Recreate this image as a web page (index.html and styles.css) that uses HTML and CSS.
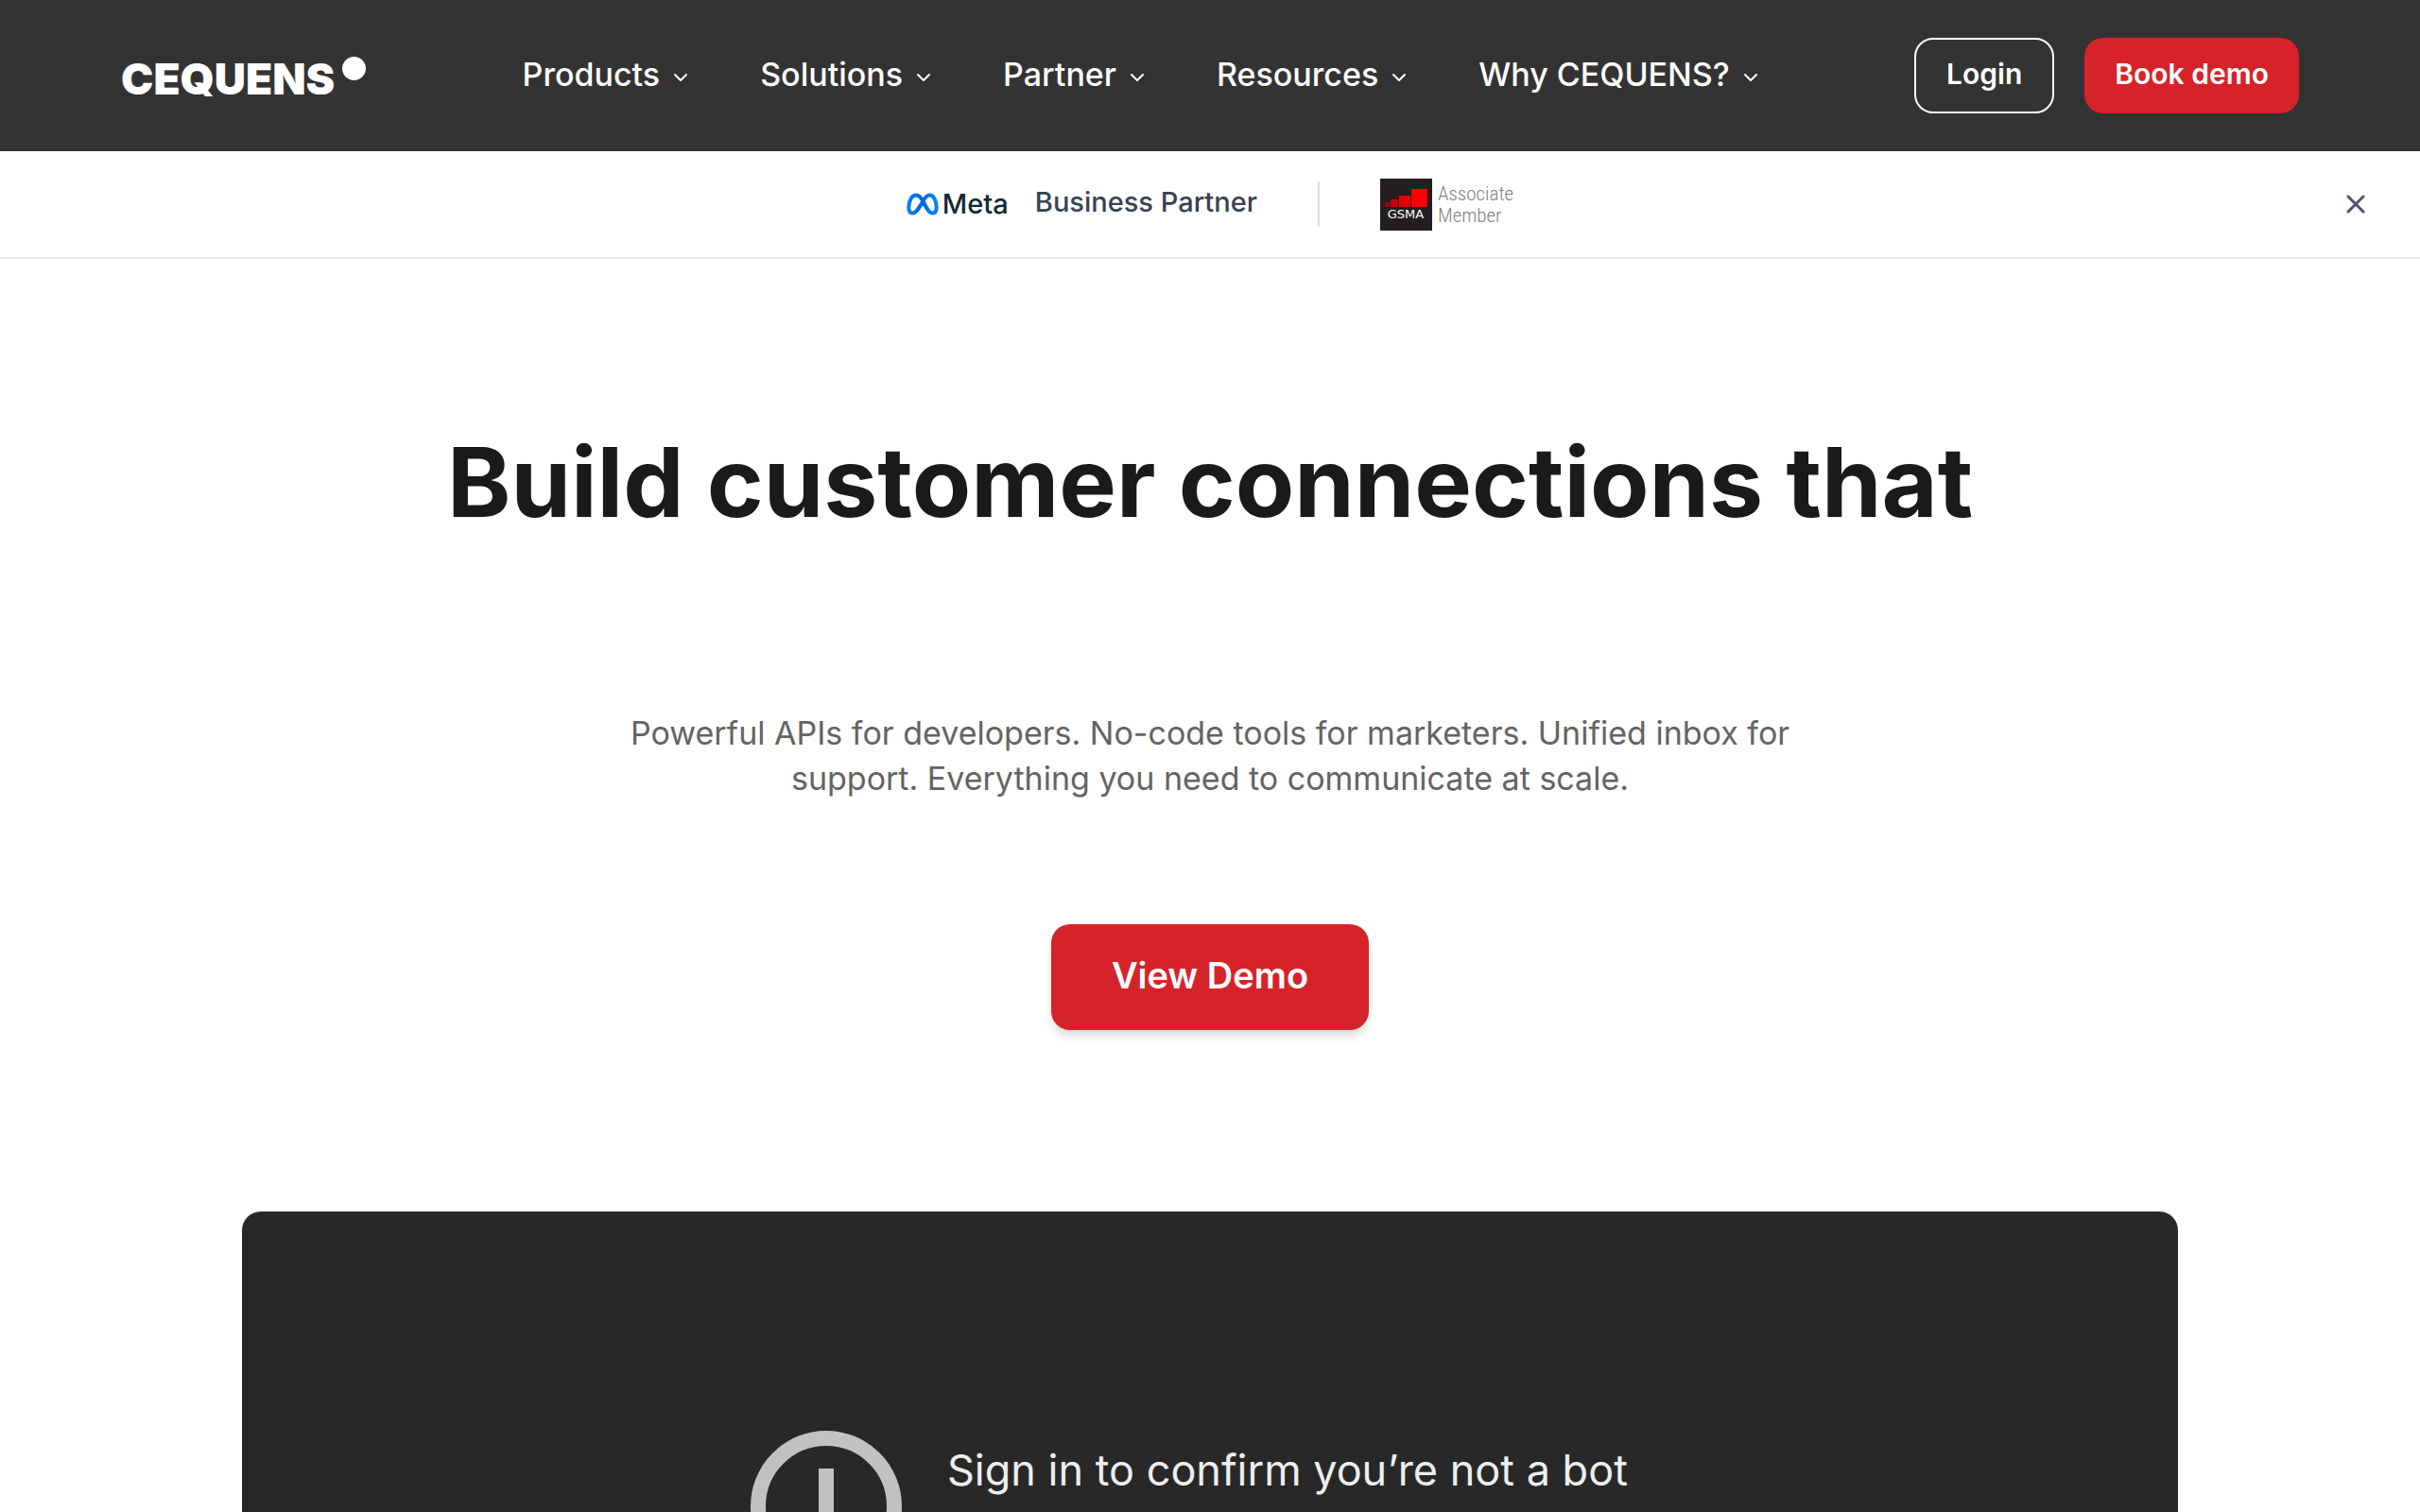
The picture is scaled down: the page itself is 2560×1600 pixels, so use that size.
FILE: index.html
```html
<!DOCTYPE html>
<html lang="en">
<head>
<meta charset="utf-8">
<meta name="viewport" content="width=device-width, initial-scale=1">
<title>CEQUENS</title>
<link rel="stylesheet" href="styles.css">
</head>
<body>
<header class="header">
  <a class="logo" href="#">CEQUENS<span class="logo-dot"></span></a>
  <nav class="nav" aria-label="Main">
    <button class="nav-item" type="button">Products<svg class="chevron" viewBox="0 0 16 12"><path d="M2 2l6 6 6-6"/></svg></button>
    <button class="nav-item" type="button">Solutions<svg class="chevron" viewBox="0 0 16 12"><path d="M2 2l6 6 6-6"/></svg></button>
    <button class="nav-item" type="button">Partner<svg class="chevron" viewBox="0 0 16 12"><path d="M2 2l6 6 6-6"/></svg></button>
    <button class="nav-item" type="button">Resources<svg class="chevron" viewBox="0 0 16 12"><path d="M2 2l6 6 6-6"/></svg></button>
    <button class="nav-item" type="button">Why CEQUENS?<svg class="chevron" viewBox="0 0 16 12"><path d="M2 2l6 6 6-6"/></svg></button>
  </nav>
  <div class="actions">
    <a class="button button-outline" href="#">Login</a>
    <a class="button" href="#">Book demo</a>
  </div>
</header>

<aside class="banner" aria-label="Partnerships">
  <div class="meta">
    <span class="meta-logo">
      <svg class="meta-mark" viewBox="0 0 34 24">
        <defs><linearGradient id="blue"><stop offset="0" stop-color="#0082fb"/><stop offset=".4" stop-color="#0064e0"/><stop offset="1" stop-color="#0082fb"/></linearGradient></defs>
        <path d="M17 8C14.500 4 12.500 2.500 10 2.500C5.500 2.500 2.300 9 2.300 15.500C2.300 19.500 4 21.500 6.500 21.500C10 21.500 12.500 17 17 9.500C19.500 5 21.500 2.500 24.500 2.500C28.800 2.500 31.700 9 31.700 15.500C31.700 19.500 30 21.500 27.500 21.500C24 21.500 22 18 17 8Z"/>
      </svg>
      <span class="meta-name">Meta</span>
    </span>
    <span class="meta-label">Business Partner</span>
  </div>
  <span class="divider"></span>
  <div class="gsma">
    <svg class="gsma-mark" viewBox="0 0 55 55">
      <rect width="55" height="55" fill="#231f20"/>
      <path d="M5 25h5v5H5z" fill="#a80000"/><path d="M11 22h8v8h-8z" fill="#c80000"/><path d="M20 18h12v12H20z" fill="#e60000"/><path d="M33 11h17v19H33z" fill="#f00"/>
      <text x="27" y="42" text-anchor="middle" class="gsma-name">GSMA</text>
    </svg>
    <span class="gsma-label">Associate<br>Member</span>
  </div>
  <button class="close" type="button" aria-label="Close"><svg class="close-icon" viewBox="0 0 20 20"><path d="M2 2l16 16M18 2L2 18"/></svg></button>
</aside>

<main class="hero">
  <h1 class="title">Build customer connections that</h1>
  <p class="lead">Powerful APIs for developers. No-code tools for marketers. Unified inbox for<br>support. Everything you need to communicate at scale.</p>
  <a class="button button-large" href="#">View Demo</a>
  <section class="video" aria-label="Video">
    <svg class="video-icon" viewBox="0 0 160 160"><circle cx="80" cy="80" r="72"/><path d="M80 40v48M80 104v16"/></svg>
    <p class="video-message">Sign in to confirm you’re not a bot</p>
  </section>
</main>
</body>
</html>
```
FILE: styles.css
```css
* {
  box-sizing: border-box;
}

body {
  margin: 0;
  height: 100vh;
  overflow: hidden;
  background: #fff;
  color: #1a1a1a;
  font-family: Inter, "Liberation Sans", sans-serif;
}

h1,
p {
  margin: 0;
}

a {
  color: inherit;
  text-decoration: none;
}

button {
  border: 0;
  padding: 0;
  background: none;
  color: inherit;
  font: inherit;
}

/* Header */
.header {
  display: flex;
  align-items: center;
  justify-content: space-between;
  height: 160px;
  padding: 0 128px;
  background: #333;
  color: #fff;
}

.logo {
  display: flex;
  align-items: center;
  gap: 8px;
  padding-top: 6px;
  font-size: 46px;
  font-weight: 900;
  line-height: 48px;
}

.logo-dot {
  width: 25px;
  height: 25px;
  margin-bottom: 22px;
  border-radius: 50%;
  background: #fff;
}

.nav {
  display: flex;
  gap: 76px;
}

.nav-item {
  display: flex;
  align-items: center;
  gap: 14px;
  padding-bottom: 2px;
  font-size: 34px;
  font-weight: 500;
  line-height: 48px;
}

.chevron {
  width: 16px;
  height: 12px;
  margin-top: 8px;
  fill: none;
  stroke: currentColor;
  stroke-width: 2;
  stroke-linecap: round;
  stroke-linejoin: round;
}

.actions {
  display: flex;
  gap: 32px;
}

.button {
  display: flex;
  align-items: center;
  justify-content: center;
  height: 80px;
  padding: 0 32px 4px;
  border-radius: 20px;
  background: #d62329;
  color: #fff;
  font-size: 30px;
  font-weight: 600;
}

.button-outline {
  border: 2px solid #fff;
  background: none;
}

/* Partner banner */
.banner {
  position: relative;
  display: flex;
  align-items: center;
  justify-content: center;
  gap: 64px;
  height: 114px;
  border-bottom: 2px solid #e5e7eb;
}

.meta {
  display: flex;
  align-items: center;
  gap: 28px;
}

.meta-logo {
  display: flex;
  align-items: center;
  gap: 4px;
}

.meta-mark {
  width: 34px;
  height: 24px;
  fill: none;
  stroke: url(#blue);
  stroke-width: 4;
}

.meta-name {
  color: #0f2a33;
  font-size: 29px;
  font-weight: 500;
  line-height: 32px;
}

.meta-label {
  padding-bottom: 4px;
  color: #374151;
  font-size: 29px;
  font-weight: 500;
  line-height: 32px;
}

.divider {
  width: 2px;
  height: 48px;
  background: #ddd;
}

.gsma {
  display: flex;
  align-items: center;
  gap: 6px;
}

.gsma-mark {
  width: 55px;
  height: 55px;
}

.gsma-name {
  fill: #fff;
  font-family: "DejaVu Sans", sans-serif;
  font-size: 13px;
}

.gsma-label {
  padding-top: 2px;
  color: #808080;
  font-family: "Roboto Condensed", Roboto, sans-serif;
  font-size: 21px;
  font-weight: 300;
  line-height: 23px;
}

.close {
  position: absolute;
  top: 32px;
  right: 44px;
  display: grid;
  place-items: center;
  width: 48px;
  height: 48px;
}

.close-icon {
  width: 20px;
  height: 20px;
  fill: none;
  stroke: #475569;
  stroke-width: 3;
  stroke-linecap: round;
}

/* Hero */
.hero {
  display: flex;
  flex-direction: column;
  align-items: center;
  padding: 176px 10% 0;
}

.title {
  font-size: 102px;
  font-weight: 700;
  line-height: 120px;
}

.lead {
  margin-top: 182px;
  color: #636363;
  font-size: 34px;
  line-height: 48px;
  text-align: center;
}

.button-large {
  height: 112px;
  margin-top: 130px;
  padding: 0 64px 4px;
  font-size: 38px;
  box-shadow: 0 8px 12px -2px rgb(0 0 0 / 16%);
}

.video {
  display: flex;
  align-items: flex-start;
  justify-content: center;
  gap: 48px;
  width: 100%;
  aspect-ratio: 16 / 9;
  margin-top: 192px;
  padding-top: 232px;
  border-radius: 20px;
  background: #282828;
}

.video-icon {
  width: 160px;
  height: 160px;
  fill: none;
  stroke: #c1c1c1;
  stroke-width: 16;
}

.video-message {
  width: 764px;
  padding-top: 14px;
  color: #eee;
  font-size: 45px;
  line-height: 56px;
  white-space: nowrap;
}
```
